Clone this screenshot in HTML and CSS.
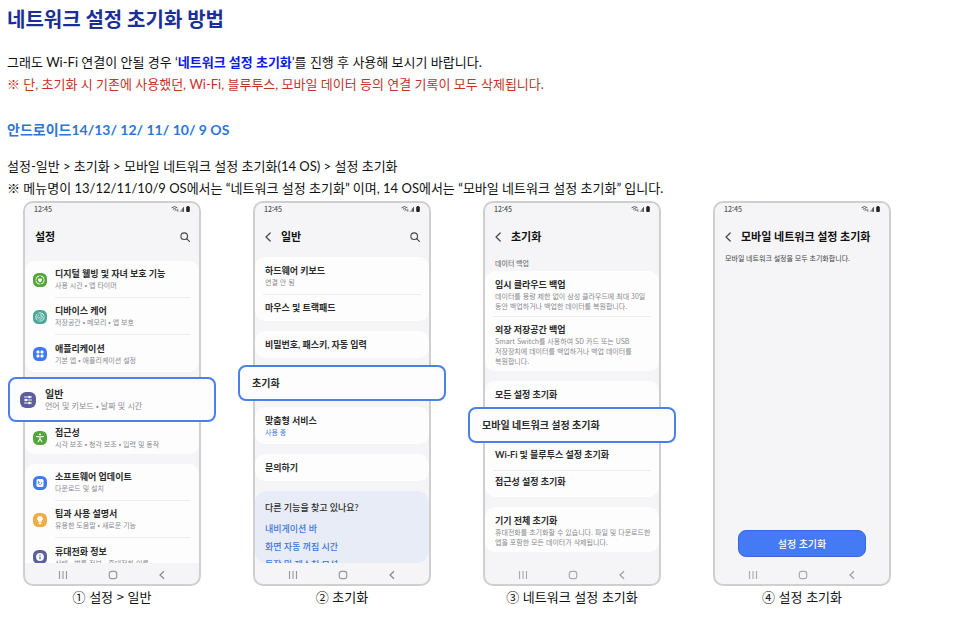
FILE: index.html
```html
<!DOCTYPE html>
<html lang="ko">
<head>
    <meta charset="UTF-8">
    <title>네트워크 설정 초기화 방법</title>
    <meta name="viewport" content="width=device-width, initial-scale=1.0">
    <link rel="stylesheet" href="styles.css">
</head>
<body>
    <!-- 공통 아이콘 -->
    <svg class="sprite" aria-hidden="true">
        <symbol id="i-status" viewBox="0 0 20 8">
            <path d="M.6 2.8Q3.5.3 6.4 2.8M1.9 4.3Q3.5 3 5.1 4.3" fill="none" stroke="#555" stroke-width="1"/>
            <path d="M3.5 6.2 5 4.6l1.8 1.8M6.8 4v2.6" fill="none" stroke="#666" stroke-width=".8"/>
            <path d="M8.5 6.8 13 1.8v5z" fill="#999"/>
            <path d="M11.4 6.8V3.6L13 1.8v5z" fill="#555"/>
            <rect x="15.2" y="1.6" width="3.6" height="5.4" rx=".9" fill="#222"/>
            <rect x="16.2" y="1" width="1.6" height="1" fill="#222"/>
        </symbol>
        <symbol id="i-search" viewBox="0 0 10 10">
            <circle cx="4.2" cy="4.2" r="3.3" fill="none" stroke="#444" stroke-width="1.1"/>
            <path d="m6.6 6.6 2.8 2.8" stroke="#444" stroke-width="1.2" stroke-linecap="round"/>
        </symbol>
        <symbol id="i-back" viewBox="0 0 6 10">
            <path d="M5.2 1 1 5l4.2 4" fill="none" stroke="#444" stroke-width="1.2" stroke-linecap="round" stroke-linejoin="round"/>
        </symbol>
        <symbol id="i-recent" viewBox="0 0 10 10">
            <path d="M1.5 1v8M5 1v8M8.5 1v8" stroke="#999" stroke-width="1.1"/>
        </symbol>
        <symbol id="i-home" viewBox="0 0 10 10">
            <rect x="1.3" y="1.3" width="7.4" height="7.4" rx="2.2" fill="none" stroke="#999" stroke-width="1.2"/>
        </symbol>
        <symbol id="i-prev" viewBox="0 0 10 10">
            <path d="M7 1.2 3 5l4 3.8" fill="none" stroke="#888" stroke-width="1.2"/>
        </symbol>
    </svg>

    <h1>네트워크 설정 초기화 방법</h1>
    <p>그래도 Wi-Fi 연결이 안될 경우 ‘<strong>네트워크 설정 초기화</strong>’를 진행 후 사용해 보시기 바랍니다.</p>
    <p class="warn">※ 단, 초기화 시 기존에 사용했던, Wi-Fi, 블루투스, 모바일 데이터 등의 연결 기록이 모두 삭제됩니다.</p>

    <h2>안드로이드14/13/ 12/ 11/ 10/ 9 OS</h2>
    <p>설정-일반 &gt; 초기화 &gt; 모바일 네트워크 설정 초기화(14 OS) &gt; 설정 초기화</p>
    <p>※ 메뉴명이 13/12/11/10/9 OS에서는 “네트워크 설정 초기화” 이며, 14 OS에서는 “모바일 네트워크 설정 초기화” 입니다.</p>

    <div class="steps">
        <!-- 1. 설정 -->
        <figure>
            <div class="phone">
                <div class="status"><span>12:45</span><svg><use href="#i-status"/></svg></div>
                <div class="head">
                    <b>설정</b>
                    <button class="search" aria-label="검색"><svg><use href="#i-search"/></svg></button>
                </div>
                <div class="list list-main">
                    <ul class="card">
                        <li class="row">
                            <svg class="icon" viewBox="0 0 14 14"><rect width="14" height="14" rx="5.5" fill="#55a63a"/><circle cx="7" cy="7" r="4.2" fill="none" stroke="#fff" stroke-width=".9" stroke-dasharray="5.6 1"/><path d="M7 9.4C3.6 7.2 5 4.6 7 6c2-1.4 3.4 1.2 0 3.4z" fill="#fff"/></svg>
                            <div class="text"><b>디지털 웰빙 및 자녀 보호 기능</b><small>사용 시간 • 앱 타이머</small></div>
                        </li>
                        <li class="row">
                            <svg class="icon" viewBox="0 0 14 14"><rect width="14" height="14" rx="5.5" fill="#4ba796"/><circle cx="7" cy="7" r="4.2" fill="none" stroke="#fff" stroke-width=".8" stroke-dasharray="7.6 1.2"/><circle cx="7" cy="7" r="2.3" fill="none" stroke="#fff" stroke-width=".7" stroke-dasharray="4 .8"/><path d="m6 7 .8.8L8.2 6.2" fill="none" stroke="#fff" stroke-width=".7"/></svg>
                            <div class="text"><b>디바이스 케어</b><small>저장공간 • 메모리 • 앱 보호</small></div>
                        </li>
                        <li class="row">
                            <svg class="icon" viewBox="0 0 14 14"><rect width="14" height="14" rx="5.5" fill="#3f78f2"/><g fill="#fff"><rect x="3.5" y="3.5" width="3" height="3" rx="1.2"/><rect x="7.5" y="3.5" width="3" height="3" rx="1.2"/><rect x="3.5" y="7.5" width="3" height="3" rx="1.2"/><rect x="7.5" y="7.5" width="3" height="3" rx="1.2"/></g></svg>
                            <div class="text"><b>애플리케이션</b><small>기본 앱 • 애플리케이션 설정</small></div>
                        </li>
                    </ul>
                    <div class="pick pick-tall">
                        <svg class="icon-big" viewBox="0 0 16 16"><rect width="16" height="16" rx="6" fill="#5d5f9c"/><path d="M4 5h8M4 8h8M4 11h8" stroke="#fff" stroke-width=".9"/><g fill="#fff"><circle cx="9.5" cy="5" r="1.2"/><circle cx="6" cy="8" r="1.2"/><circle cx="9.5" cy="11" r="1.2"/></g></svg>
                        <div><b>일반</b><small>언어 및 키보드 • 날짜 및 시간</small></div>
                    </div>
                    <ul class="card card-end">
                        <li class="row row-low">
                            <svg class="icon" viewBox="0 0 14 14"><rect width="14" height="14" rx="5.5" fill="#55a63a"/><circle cx="7" cy="3.5" r="1.1" fill="#fff"/><path d="M3.6 5.5 7 6l3.4-.5M7 6v2M7 7.7l-1.8 3M7 7.7l1.8 3" fill="none" stroke="#fff" stroke-width="1.1" stroke-linecap="round"/></svg>
                            <div class="text"><b>접근성</b><small>시각 보조 • 청각 보조 • 입력 및 동작</small></div>
                        </li>
                    </ul>
                    <ul class="card">
                        <li class="row">
                            <svg class="icon" viewBox="0 0 14 14"><rect width="14" height="14" rx="5.5" fill="#3f78f2"/><rect x="3.5" y="3" width="7" height="8" rx="1.5" fill="#fff"/><path d="M5.5 6.2A1.7 1.7 0 1 0 8 5.6M5.4 5v1.5h1.4" fill="none" stroke="#3f78f2" stroke-width=".8"/></svg>
                            <div class="text"><b>소프트웨어 업데이트</b><small>다운로드 및 설치</small></div>
                        </li>
                        <li class="row">
                            <svg class="icon" viewBox="0 0 14 14"><rect width="14" height="14" rx="5.5" fill="#f0ac45"/><path d="M7 3a2.9 2.9 0 0 0-1.5 5.3v1.2h3V8.3A2.9 2.9 0 0 0 7 3zM5.9 10h2.2v1.2H5.9z" fill="#fff"/></svg>
                            <div class="text"><b>팁과 사용 설명서</b><small>유용한 도움말 • 새로운 기능</small></div>
                        </li>
                        <li class="row">
                            <svg class="icon" viewBox="0 0 14 14"><rect width="14" height="14" rx="5.5" fill="#5d5f9c"/><circle cx="7" cy="7" r="3.9" fill="#fff"/><path d="M7 6.4v2.8M7 4.6v1.1" stroke="#5d5f9c" stroke-width="1.2"/></svg>
                            <div class="text"><b>휴대전화 정보</b><small>상태 • 법률 정보 • 휴대전화 이름</small></div>
                        </li>
                    </ul>
                </div>
                <div class="nav">
                    <button aria-label="최근 앱"><svg><use href="#i-recent"/></svg></button>
                    <button aria-label="홈"><svg><use href="#i-home"/></svg></button>
                    <button aria-label="뒤로"><svg><use href="#i-prev"/></svg></button>
                </div>
            </div>
            <figcaption>① 설정 &gt; 일반</figcaption>
        </figure>

        <!-- 2. 일반 -->
        <figure>
            <div class="phone">
                <div class="status"><span>12:45</span><svg><use href="#i-status"/></svg></div>
                <div class="head">
                    <button class="back" aria-label="뒤로"><svg><use href="#i-back"/></svg></button>
                    <b>일반</b>
                    <button class="search" aria-label="검색"><svg><use href="#i-search"/></svg></button>
                </div>
                <div class="list">
                    <ul class="card">
                        <li class="item item-sub"><b>하드웨어 키보드</b><small>연결 안 됨</small></li>
                        <li class="item"><b>마우스 및 트랙패드</b></li>
                    </ul>
                    <ul class="card">
                        <li class="item"><b>비밀번호, 패스키, 자동 입력</b></li>
                    </ul>
                    <div class="pick"><b>초기화</b></div>
                    <ul class="card">
                        <li class="item item-sub"><b>맞춤형 서비스</b><small class="on">사용 중</small></li>
                    </ul>
                    <ul class="card">
                        <li class="item"><b>문의하기</b></li>
                    </ul>
                    <div class="more">
                        <b>다른 기능을 찾고 있나요?</b>
                        <a href="#">내비게이션 바</a>
                        <a href="#">화면 자동 꺼짐 시간</a>
                        <a href="#">동작 및 제스처 모션</a>
                    </div>
                </div>
                <div class="nav">
                    <button aria-label="최근 앱"><svg><use href="#i-recent"/></svg></button>
                    <button aria-label="홈"><svg><use href="#i-home"/></svg></button>
                    <button aria-label="뒤로"><svg><use href="#i-prev"/></svg></button>
                </div>
            </div>
            <figcaption>② 초기화</figcaption>
        </figure>

        <!-- 3. 초기화 -->
        <figure>
            <div class="phone">
                <div class="status"><span>12:45</span><svg><use href="#i-status"/></svg></div>
                <div class="head">
                    <button class="back" aria-label="뒤로"><svg><use href="#i-back"/></svg></button>
                    <b>초기화</b>
                </div>
                <div class="list">
                    <div class="label">데이터 백업</div>
                    <ul class="card">
                        <li class="item item-text"><b>임시 클라우드 백업</b><small>데이터를 용량 제한 없이 삼성 클라우드에 최대 30일<br>동안 백업하거나 백업한 데이터를 복원합니다.</small></li>
                        <li class="item item-text"><b>외장 저장공간 백업</b><small>Smart Switch를 사용하여 SD 카드 또는 USB<br>저장장치에 데이터를 백업하거나 백업 데이터를<br>복원합니다.</small></li>
                    </ul>
                    <ul class="card card-start">
                        <li class="item"><b>모든 설정 초기화</b></li>
                    </ul>
                    <div class="pick pick-join"><b>모바일 네트워크 설정 초기화</b></div>
                    <ul class="card card-end">
                        <li class="item"><b>Wi-Fi 및 블루투스 설정 초기화</b></li>
                        <li class="item"><b>접근성 설정 초기화</b></li>
                    </ul>
                    <ul class="card">
                        <li class="item item-text"><b>기기 전체 초기화</b><small>휴대전화를 초기화할 수 있습니다. 파일 및 다운로드한<br>앱을 포함한 모든 데이터가 삭제됩니다.</small></li>
                    </ul>
                </div>
                <div class="nav nav-light">
                    <button aria-label="최근 앱"><svg><use href="#i-recent"/></svg></button>
                    <button aria-label="홈"><svg><use href="#i-home"/></svg></button>
                    <button aria-label="뒤로"><svg><use href="#i-prev"/></svg></button>
                </div>
            </div>
            <figcaption>③ 네트워크 설정 초기화</figcaption>
        </figure>

        <!-- 4. 설정 초기화 -->
        <figure>
            <div class="phone">
                <div class="status"><span>12:45</span><svg><use href="#i-status"/></svg></div>
                <div class="head">
                    <button class="back" aria-label="뒤로"><svg><use href="#i-back"/></svg></button>
                    <b>모바일 네트워크 설정 초기화</b>
                </div>
                <div class="list list-reset">
                    <div class="desc">모바일 네트워크 설정을 모두 초기화합니다.</div>
                    <button class="reset-btn">설정 초기화</button>
                </div>
                <div class="nav nav-light">
                    <button aria-label="최근 앱"><svg><use href="#i-recent"/></svg></button>
                    <button aria-label="홈"><svg><use href="#i-home"/></svg></button>
                    <button aria-label="뒤로"><svg><use href="#i-prev"/></svg></button>
                </div>
            </div>
            <figcaption>④ 설정 초기화</figcaption>
        </figure>
    </div>
</body>
</html>
```

FILE: styles.css
```css
* { box-sizing: border-box; }
body {
    margin: 0;
    padding: 5px 7px;
    background: #fff;
    color: #111;
    font-family: Lato, "Noto Sans CJK KR", sans-serif;
    font-size: 13px;
    line-height: 22px;
}
h1 { margin: 0 0 18px; font-size: 20px; line-height: 28px; color: #1b2f97; }
h2 { margin: 23px 0 13px; font-size: 14px; line-height: 24px; color: #2e75d8; }
p { margin: 0; }
p strong { color: #0a1af0; }
.warn { color: #c5322b; }
ul { margin: 0; padding: 0; list-style: none; }
button { border: none; padding: 0; background: none; font-family: inherit; cursor: pointer; }
a { color: #3f74dc; text-decoration: none; }
svg { display: block; }
.sprite { display: none; }

.steps {
    display: grid;
    grid-template-columns: repeat(4, 1fr);
    column-gap: 20px;
    max-width: 900px;
    margin-top: 2px;
}
figure { margin: 0; min-width: 0; }
figcaption { text-align: center; font-family: "Noto Sans CJK KR", sans-serif; }

/* 휴대폰 화면 */
.phone {
    display: flex;
    flex-direction: column;
    margin: 0 16px;
    border: 2px solid #cfcfcf;
    border-radius: 10px;
    background: #f5f5f7;
    color: #2b2b2b;
    font-size: 9px;
    line-height: 12px;
    white-space: nowrap;
}
.phone small { display: block; font-family: "Noto Sans CJK KR", sans-serif; font-size: 7px; line-height: 10px; color: #8a8a8e; }
.phone b { display: block; }
.status {
    display: flex;
    justify-content: space-between;
    align-items: center;
    height: 12px;
    padding: 0 8px 0 9px;
    font-family: "Noto Sans CJK KR", sans-serif;
    font-size: 7px;
    font-weight: 500;
    color: #555;
}
.status svg { width: 20px; height: 8px; }
.head {
    display: flex;
    align-items: center;
    height: 42px;
    padding: 2px 9px 0 10px;
    font-size: 11px;
    color: #111;
}
.search { margin-left: auto; }
.search svg { width: 10px; height: 10px; }
.back { margin-right: 10px; }
.back svg { width: 6px; height: 10px; }

/* 강조 상자가 옆으로 나오도록 가로는 자르지 않음 */
.list { height: 306px; overflow-x: visible; overflow-y: clip; }
.list-main { padding-top: 4px; }
.card { margin-bottom: 10px; border-radius: 10px; background: #fdfdfe; }
.row { display: flex; align-items: center; height: 37px; padding-left: 8px; }
.row-low { height: 32px; }
.icon { width: 14px; height: 14px; margin-right: 8px; flex: none; }
.text {
    display: flex;
    flex-direction: column;
    justify-content: center;
    flex: 1;
    height: 100%;
    margin-right: 9px;
    border-bottom: 1px solid #ededee;
}
.row:last-child .text { border-bottom: none; }

.pick {
    position: relative;
    display: flex;
    align-items: center;
    height: 36px;
    margin: -3px -17px 6px;
    padding: 0 12px;
    border: 2px solid #4a80ea;
    border-radius: 8px;
    background: #fdfdfe;
    font-size: 10px;
}
.pick-tall { height: 45px; margin: -5px -17px 0; padding: 0 10px; }
.pick-tall small { font-size: 8px; line-height: 12px; }
.pick-join { margin-top: 0; margin-bottom: 0; }
.icon-big { width: 16px; height: 16px; margin-right: 9px; }
.card-start { margin-bottom: 0; border-radius: 10px 10px 0 0; }
.card-end { border-radius: 0 0 10px 10px; }

.item { height: 27px; padding: 8px 0 0 10px; }
.item-sub { height: 37px; }
.item-text { height: auto; padding-bottom: 5px; }
.item + .item { background: linear-gradient(#ededee, #ededee) no-repeat 8px 0 / calc(100% - 16px) 1px; }
.card-start .item { height: 26px; }
.card-end .item { padding-top: 6px; }
.phone .on { color: #3f74dc; }
.more { height: 72px; padding: 11px 0 0 10px; border-radius: 12px; background: #e8ecf7; overflow: hidden; }
.more b { font-weight: 500; margin-bottom: 6px; }
.more a { display: block; line-height: 18px; font-weight: 500; }
.label { height: 14px; padding-left: 10px; font-size: 7px; font-weight: 500; color: #77777b; }

.list-reset {
    display: flex;
    flex-direction: column;
    justify-content: space-between;
    align-items: center;
    padding-bottom: 6px;
    overflow: visible;
}
.desc { align-self: flex-start; margin-top: -4px; padding-left: 10px; font-size: 7px; line-height: 10px; color: #444; }
.reset-btn {
    width: 128px;
    height: 27px;
    border: 1px solid #3568d8;
    border-radius: 8px;
    background: #447bf5;
    color: #fff;
    font-size: 10px;
    font-weight: 500;
}

.nav { display: flex; justify-content: space-between; align-items: center; height: 21px; padding: 2px 32px 0 33px; }
.nav svg { width: 10px; height: 10px; }
.nav-light { opacity: .8; }
```
